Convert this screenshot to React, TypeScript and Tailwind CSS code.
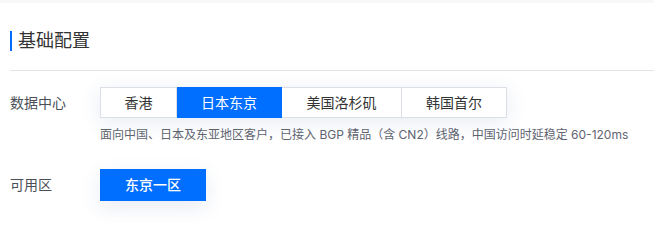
import { useState } from "react";

const REGIONS = [
  { name: "香港", w: "w-[77px]" },
  { name: "日本东京", w: "w-[105px]" },
  { name: "美国洛杉矶", w: "w-[120px]" },
  { name: "韩国首尔", w: "w-[105px]" },
];

export default function App() {
  const [region, setRegion] = useState("日本东京");

  return (
    <div
      className="w-[654px] h-[223px] bg-white overflow-hidden"
      style={{ fontFamily: 'Inter, "Noto Sans CJK SC", "Noto Sans", sans-serif' }}
    >
      <div className="h-[3px] bg-[#f7f8fa]" />
      <div className="pl-[10px]">
        <div className="mt-[28px] flex h-[20px] items-center">
          <span className="h-[20px] w-[2px] bg-[#006eff]" />
          <h2 className="ml-[6px] text-[18px] leading-[20px] text-[#333]">基础配置</h2>
        </div>
        <div className="mt-[19px] h-px bg-[#e5e5e5]" />

        <div className="mt-[16px] flex">
          <div className="w-[90px] pt-[6px] text-[14px] leading-[20px] text-[#4b4f57]">数据中心</div>
          <div>
            <div className="flex w-fit shadow-[0_4px_20px_rgba(54,88,160,0.12)]">
              {REGIONS.map((r, i) => {
                const active = r.name === region;
                return (
                  <button
                    key={r.name}
                    onClick={() => setRegion(r.name)}
                    className={
                      r.w +
                      " h-[31px] text-center text-[14px] leading-[20px] border-y border-r " +
                      (i === 0 ? "border-l " : "") +
                      (active
                        ? "bg-[#006eff] text-white border-[#006eff]"
                        : "bg-white text-[#333] border-[#dcdfe6]")
                    }
                  >
                    {r.name}
                  </button>
                );
              })}
            </div>
            <p className="mt-[8px] text-[12px] leading-[18px] text-[#5f6470]">
              面向中国、日本及东亚地区客户，已接入 BGP 精品（含 CN2）线路，中国访问时延稳定 60-120ms
            </p>
          </div>
        </div>

        <div className="mt-[25px] flex">
          <div className="w-[90px] pt-[6px] text-[14px] leading-[20px] text-[#4b4f57]">可用区</div>
          <button className="h-[32px] w-[106px] bg-[#006eff] text-[14px] font-medium leading-[20px] text-white shadow-[0_6px_20px_rgba(54,88,160,0.12)]">
            东京一区
          </button>
        </div>
      </div>
    </div>
  );
}
